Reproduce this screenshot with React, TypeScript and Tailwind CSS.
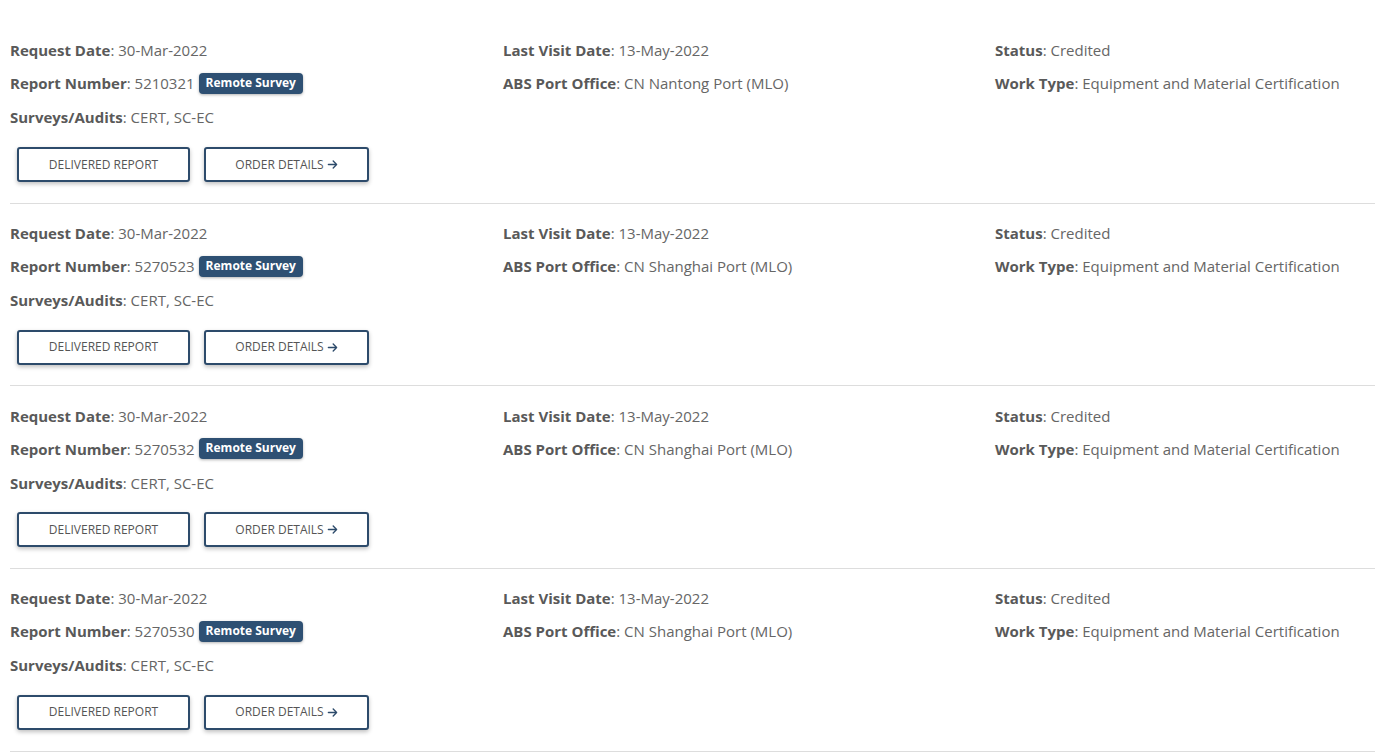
import React from 'react'

const rows = [
  { report: '5210321', office: 'CN Nantong Port (MLO)' },
  { report: '5270523', office: 'CN Shanghai Port (MLO)' },
  { report: '5270532', office: 'CN Shanghai Port (MLO)' },
  { report: '5270530', office: 'CN Shanghai Port (MLO)' },
]

function Field({ label, value, className = '', children }: { label: string; value: string; className?: string; children?: React.ReactNode }) {
  return (
    <div className={'h-[33px] flex items-center whitespace-nowrap ' + className}>
      <span className="font-bold text-[#595959]">{label}</span>
      <span className="text-[#666666]">: {value}</span>
      {children}
    </div>
  )
}

function Arrow() {
  return (
    <svg className="w-[11px] h-[11px] ml-[3px]" viewBox="0 0 448 512" fill="#2d4b6b">
      <path d="M438.6 278.6c12.5-12.5 12.5-32.8 0-45.3l-160-160c-12.5-12.5-32.8-12.5-45.3 0s-12.5 32.8 0 45.3L338.8 224 32 224c-17.7 0-32 14.3-32 32s14.3 32 32 32l306.7 0L233.4 393.4c-12.5 12.5-12.5 32.8 0 45.3s32.8 12.5 45.3 0l160-160z" />
    </svg>
  )
}

export default function App() {
  return (
    <div className="bg-white min-h-[752px] pl-[10px] pt-[21px] text-[15px]" style={{ fontFamily: '"Open Sans", "Liberation Sans", sans-serif' }}>
      {rows.map((r, i) => (
        <div key={i} className="border-b border-[#dddddd] pt-[13px] pb-[20.67px]">
          <div className="grid grid-cols-[493px_492px_1fr]">
            <div>
              <Field label="Request Date" value="30-Mar-2022" />
              <Field label="Report Number" value={r.report}>
                <span className="ml-[4px] bg-[#2e5073] text-white font-bold text-[12px] leading-none rounded-[4px] px-[7px] pt-[4px] pb-[5px] shadow-[0_1px_3px_rgba(0,0,0,0.3)]">
                  Remote Survey
                </span>
              </Field>
              <Field label="Surveys/Audits" value="CERT, SC-EC" className="mt-[1px]" />
            </div>
            <div>
              <Field label="Last Visit Date" value="13-May-2022" />
              <Field label="ABS Port Office" value={r.office} />
            </div>
            <div>
              <Field label="Status" value="Credited" />
              <Field label="Work Type" value="Equipment and Material Certification" />
            </div>
          </div>
          <div className="flex gap-[14px] pl-[7px] mt-[13px]">
            <button className="w-[173px] h-[35px] border-2 border-[#2d4b6b] rounded-[3px] bg-white text-[12px] uppercase text-[#555555] shadow-[0_2px_4px_rgba(0,0,0,0.25)] flex items-center justify-center">
              Delivered Report
            </button>
            <button className="w-[165px] h-[35px] border-2 border-[#2d4b6b] rounded-[3px] bg-white text-[12px] uppercase text-[#555555] shadow-[0_2px_4px_rgba(0,0,0,0.25)] flex items-center justify-center">
              Order Details
              <Arrow />
            </button>
          </div>
        </div>
      ))}
    </div>
  )
}
